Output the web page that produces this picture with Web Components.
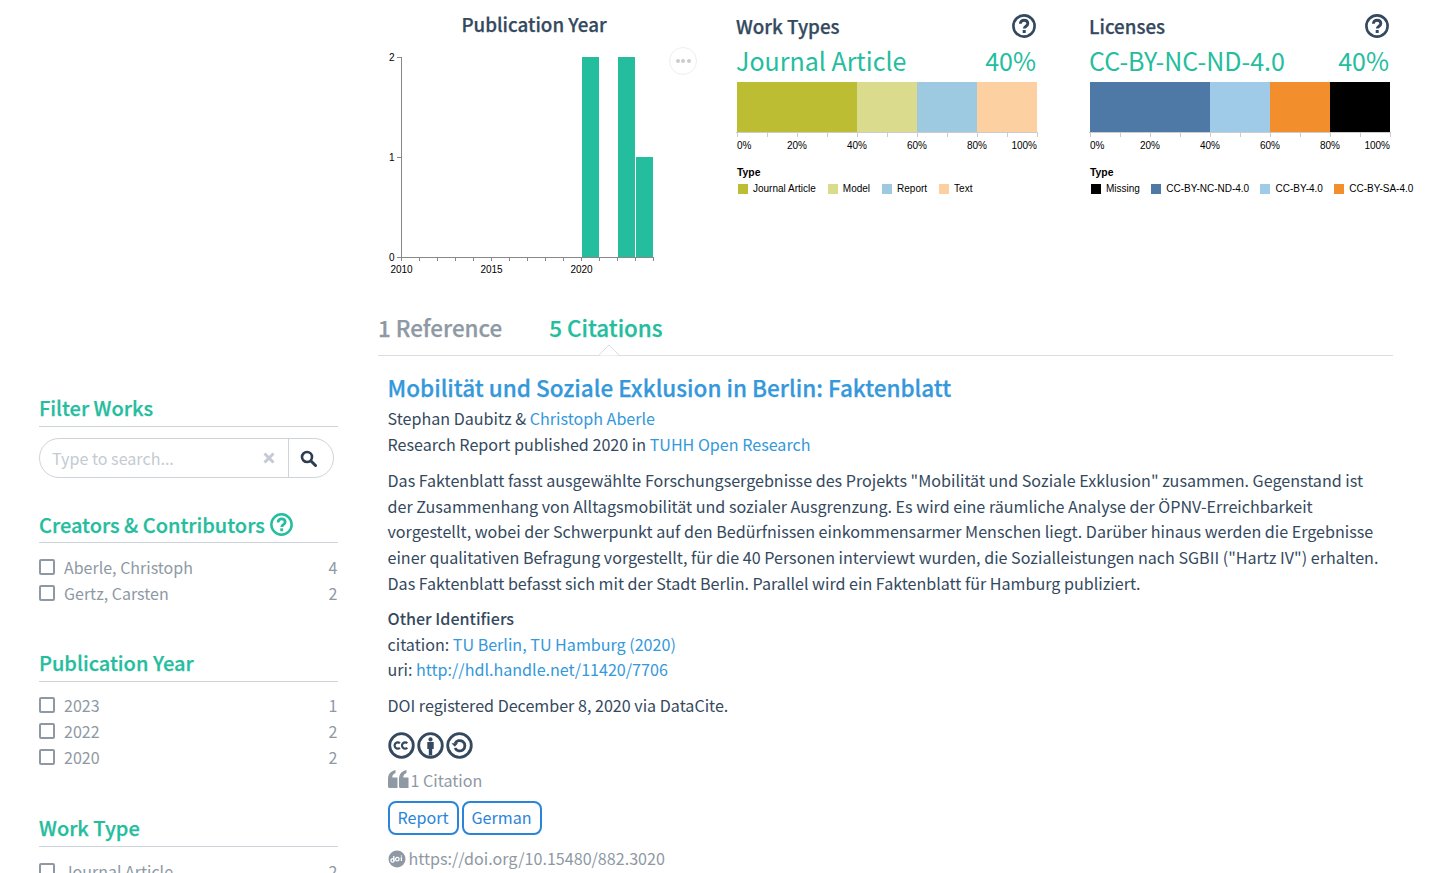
<!DOCTYPE html>
<html><head><meta charset="utf-8">
<style>
html,body{margin:0;padding:0;height:873px;overflow:hidden;background:#fff}
body{font:16.1px/25.7px "Noto Sans CJK SC","Noto Sans",sans-serif;color:#34495e}
</style></head><body>
<app-page></app-page>
<script>
const FONT='"Noto Sans CJK SC","Noto Sans",sans-serif';
function def(name,html){
  customElements.define(name,class extends HTMLElement{
    constructor(){super();this.attachShadow({mode:'open'}).innerHTML=typeof html==='function'?html(this):html;}
  });
}
const help=(c,s)=>`<svg width="${s}" height="${s}" viewBox="0 0 24 24" fill="none" style="display:block"><circle cx="12" cy="12" r="10.6" stroke="${c}" stroke-width="2.6"/><path d="M8.400 9.800c0-2.200 1.600-3.600 3.700-3.600s3.700 1.300 3.700 3.300c0 2.800-3.500 2.600-3.500 5.100" stroke="${c}" stroke-width="2.900"/><rect x="10.700" y="16" width="3" height="3" fill="${c}"/></svg>`;

def('year-chart',()=>{
  let t='';
  for(let i=0;i<=14;i++){const x=23.5+i*18;t+=`<path d="M${x} 257V261" stroke="#888"/>`}
  const lab=(x,y,s,a='middle')=>`<text x="${x}" y="${y}" text-anchor="${a}">${s}</text>`;
  return `<style>:host{display:block;width:359px;height:292px;position:relative}
  h3{margin:0;text-align:center;width:312px;font:500 18.800px/26px ${FONT};-webkit-text-stroke:.25px #34495e;padding-top:11px;color:#34495e}
  svg{display:block;margin-top:6px}
  text{font:10px "Liberation Sans",sans-serif;fill:#000}
  .more{position:absolute;left:291px;top:47px;width:26px;height:26px;border:1px solid #eee;border-radius:50%;background:#fff;display:flex;align-items:center;justify-content:center;gap:1.500px}
  .more i{width:4px;height:4px;border-radius:50%;background:#ccc}
  </style>
  <h3>Publication Year</h3>
  <svg width="300" height="240" viewBox="0 43 300 240">
   <path d="M23.500 57V257.500H275.500" fill="none" stroke="#888"/>
   <path d="M19 57.500H23M19 157.500H23M19 257.500H23" stroke="#888"/>
   ${t}
   <rect x="204" y="57" width="17" height="200" fill="#24bd9e"/>
   <rect x="240" y="57" width="17" height="200" fill="#24bd9e"/>
   <rect x="258" y="157" width="17" height="100" fill="#24bd9e"/>
   ${lab(16.500,61,'2','end')}${lab(16.500,161,'1','end')}${lab(16.500,261,'0','end')}
   ${lab(23.500,273,'2010')}${lab(113.500,273,'2015')}${lab(203.500,273,'2020')}
  </svg>
  <div class="more"><i></i><i></i><i></i></div>`;
});

def('stack-chart',(el)=>{
  const data=JSON.parse(el.getAttribute('data-d'));
  let bars='',x=0;
  data.bars.forEach(b=>{bars+=`<rect x="${x+1}" y="0" width="${b[1]*3}" height="50" fill="${b[0]}"/>`;x+=b[1]*3});
  let ticks='';for(let i=0;i<=10;i++){ticks+=`<path d="M${1.500+i*30} 50V55" stroke="#ccc"/>`}
  let labs='';[0,20,40,60,80,100].forEach(p=>{const px=1+p*3;
    labs+=`<text x="${p==100?301:px}" y="66.500" text-anchor="${p==0?'start':p==100?'end':'middle'}">${p}%</text>`});
  let leg='';data.legend.forEach(l=>{leg+=`<span class="li"><i style="background:${l[0]}"></i>${l[1]}</span>`});
  return `<style>:host{display:block;width:${el.getAttribute('w')}px;padding-top:13px}
  .h{display:flex;justify-content:space-between;align-items:center;width:300px;margin-left:-1px;height:26px;font:500 18.800px/26px ${FONT};-webkit-text-stroke:.25px #34495e;color:#34495e}
  .v{display:flex;justify-content:space-between;width:300px;margin-left:-1px;font:25px/34px ${FONT};color:#24bd9e;margin-top:4px}
  .c{display:block;margin-top:5px;margin-left:-1px}
  text{font:10px "Liberation Sans",sans-serif;fill:#000}
  .t{font:bold 10.400px/12px "Liberation Sans",sans-serif;color:#000;margin-top:15px}
  .l{display:flex;font:10px/12px "Liberation Sans",sans-serif;color:#000;margin-top:4px;white-space:nowrap}
  .li{display:flex;align-items:center;margin-right:${el.getAttribute('gap')}px}
  .li i{width:10px;height:10px;margin:0 5px 0 1px}
  </style>
  <div class="h"><span>${el.getAttribute('title')}</span>${help('#34495e',24)}</div>
  <div class="v"><span>${data.name}</span><span>40%</span></div>
  <svg class="c" width="303" height="70" viewBox="0 0 303 70">${bars}<path d="M0 50.500H302" stroke="#ccc"/>${ticks}${labs}</svg>
  <div class="t">Type</div>
  <div class="l">${leg}</div>`;
});

def('search-box',`<style>:host{display:flex;width:295px;height:40px;box-sizing:border-box;border:1px solid #ced4da;border-radius:20px;margin-top:11px;font:16.100px/38px ${FONT}}
 .i{flex:1;color:#c4cbd2;padding-left:12px;display:flex;justify-content:space-between;align-items:center}
 .x{margin-right:13px;display:block}
 .b{width:45px;border-left:1px solid #ced4da;display:flex;align-items:center;justify-content:center;box-sizing:border-box;padding-right:5px}
 </style><div class="i"><span>Type to search...</span><svg class="x" width="12" height="12" viewBox="0 0 12 12"><path d="M1.500 1.500l9 9M10.500 1.500l-9 9" stroke="#c4cbd2" stroke-width="3"/></svg></div>
 <div class="b"><svg width="17" height="17" viewBox="0 0 17 17" fill="none"><circle cx="7" cy="7" r="5" stroke="#2c3e50" stroke-width="2.600"/><path d="M11 11l4.500 4.500" stroke="#2c3e50" stroke-width="3" stroke-linecap="round"/></svg></div>`);

def('facet-head',(el)=>`<style>:host{display:block;border-bottom:1px solid #ced4da;height:33px;font:500 20px/30px ${FONT};-webkit-text-stroke:.25px #24bd9e;color:#24bd9e}
 div{display:flex;align-items:center;gap:5px;height:${el.hasAttribute('help')?31:30}px}</style><div><slot></slot>${el.hasAttribute('help')?help('#24bd9e',23):''}</div>`);

def('facet-item',(el)=>`<style>:host{display:flex;height:26px;align-items:center;font:16px/26px ${FONT};color:#8e99a4}
 i{width:12px;height:12px;border:2px solid #8e99a4;border-radius:2px;margin-right:9px;flex:none}
 span{flex:1}b{font-weight:400;margin-right:.5px}</style><i></i><span><slot></slot></span><b>${el.getAttribute('n')}</b>`);

def('side-bar',`<style>:host{display:block;width:378px;padding:393px 40px 0 39px;box-sizing:border-box;flex:none}</style>
 <facet-head>Filter Works</facet-head><search-box></search-box>
 <facet-head help style="margin-top:31px">Creators &amp; Contributors</facet-head>
 <div style="margin-top:11px"><facet-item n="4">Aberle, Christoph</facet-item><facet-item n="2">Gertz, Carsten</facet-item></div>
 <facet-head style="margin-top:42px">Publication Year</facet-head>
 <div style="margin-top:10px"><facet-item n="1">2023</facet-item><facet-item n="2">2022</facet-item><facet-item n="2">2020</facet-item></div>
 <facet-head style="margin-top:43px">Work Type</facet-head>
 <div style="margin-top:11px"><facet-item n="2">Journal Article</facet-item></div>`);

def('tab-bar',`<style>:host{display:flex;gap:47px;height:52px;border-bottom:1px solid #ddd;position:relative;font:500 22.400px/49px ${FONT};color:#8e99a4}
 span{-webkit-text-stroke:.25px #8e99a4}
 .a{color:#24bd9e;-webkit-text-stroke:.25px #24bd9e}
 span:first-child{margin-left:-.5px}
 svg{position:absolute;left:220px;bottom:-1px;display:block}
 </style><span>1 Reference</span><span class="a">5 Citations</span>
 <svg width="23" height="12" viewBox="0 0 23 12"><path d="M0 11.500H.5L11 1l10.500 10.500H23" fill="#fff" stroke="#ddd"/></svg>`);

def('cc-icons',`<style>:host{display:flex;gap:2px;margin-top:13px;height:27px}svg{display:block}</style>
 <svg width="27" height="27" viewBox="0 0 27 27" fill="none"><circle cx="13.500" cy="13.500" r="11.800" stroke="#34495e" stroke-width="2.800"/><path d="M11.900 11.300a3.100 3.100 0 1 0 0 4.400M19.300 11.300a3.100 3.100 0 1 0 0 4.400" stroke="#34495e" stroke-width="2.200"/></svg>
 <svg width="27" height="27" viewBox="0 0 27 27" fill="none"><circle cx="13.500" cy="13.500" r="11.800" stroke="#34495e" stroke-width="2.800"/><circle cx="13.500" cy="7.400" r="2.100" fill="#34495e"/><path d="M10.300 10h6.400v7h-1.500v6.500h-3.400v-6.500h-1.500z" fill="#34495e"/></svg>
 <svg width="27" height="27" viewBox="0 0 27 27" fill="none"><circle cx="13.500" cy="13.500" r="11.800" stroke="#34495e" stroke-width="2.800"/><path d="M9 11.500a5.200 5.200 0 1 1 0 4.500" stroke="#34495e" stroke-width="2.800"/><path d="M5.500 11.200h6.600l-3.300 3.600z" fill="#34495e"/></svg>`);

def('work-item',`<style>:host{display:block;padding:18px 0 0 9.500px;font:16.100px/25.700px ${FONT};color:#34495e}
 a{color:#3498db;text-decoration:none}
 h4{margin:0;font:500 22.500px/26px ${FONT};-webkit-text-stroke:.25px #3498db}
 p{margin:0;width:1000px}
 .a0{margin-top:6px}
 .abs{margin-top:10.600px}
 .ids{margin-top:9.400px;font-weight:500}
 .reg{margin-top:10px}
 .cit{display:flex;align-items:center;color:#8e99a4;height:24px;margin-top:10px}
 .cit svg{margin-right:2px;position:relative;top:-2px}
 .tags{display:flex;gap:3px;margin-top:8px}
 .tag{border:2px solid #2a85d8;color:#2a85d8;border-radius:8px;height:34px;line-height:28px;padding:0 8px;box-sizing:border-box}
 .doi{display:flex;align-items:center;gap:3px;color:#8e99a4;margin-top:11px;height:26px}
 </style>
 <h4><a>Mobilität und Soziale Exklusion in Berlin: Faktenblatt</a></h4>
 <p class="a0">Stephan Daubitz &amp; <a>Christoph Aberle</a></p>
 <p>Research Report published 2020 in <a>TUHH Open Research</a></p>
 <p class="abs">Das Faktenblatt fasst ausgewählte Forschungsergebnisse des Projekts "Mobilität und Soziale Exklusion" zusammen. Gegenstand ist der Zusammenhang von Alltagsmobilität und sozialer Ausgrenzung. Es wird eine räumliche Analyse der ÖPNV-Erreichbarkeit vorgestellt, wobei der Schwerpunkt auf den Bedürfnissen einkommensarmer Menschen liegt. Darüber hinaus werden die Ergebnisse einer qualitativen Befragung vorgestellt, für die 40 Personen interviewt wurden, die Sozialleistungen nach SGBII ("Hartz IV") erhalten. Das Faktenblatt befasst sich mit der Stadt Berlin. Parallel wird ein Faktenblatt für Hamburg publiziert.</p>
 <p class="ids">Other Identifiers</p>
 <p>citation: <a>TU Berlin, TU Hamburg (2020)</a></p>
 <p>uri: <a>http://hdl.handle.net/11420/7706</a></p>
 <p class="reg">DOI registered December 8, 2020 via DataCite.</p>
 <cc-icons></cc-icons>
 <div class="cit"><svg width="21" height="18" viewBox="0 0 21 18" fill="#8e99a4"><path d="M0 9.500C0 4 2.800 1 7.500 0v3C5.300 3.700 4.200 5.300 4.300 7.400H9.500V18H1.500A1.500 1.500 0 0 1 0 16.500zM11 9.500C11 4 13.800 1 18.500 0v3c-2.200.7-3.300 2.300-3.200 4.400h5.200V18h-8A1.500 1.500 0 0 1 11 16.500z"/></svg>1 Citation</div>
 <div class="tags"><span class="tag">Report</span><span class="tag">German</span></div>
 <div class="doi"><svg width="18" height="18" viewBox="0 0 18 18"><circle cx="9" cy="9" r="8.500" fill="#8e99a4"/><path d="M5.800 5.900v5M5.800 9.200a1.700 1.700 0 1 1-.01-.01M9.300 7.300a1.800 1.800 0 1 0 .01 0M13.400 7.300v3.700M13.400 5.500v1" fill="none" stroke="#fff" stroke-width="1.300"/></svg><span>https://doi.org/10.15480/882.3020</span></div>`);

def('main-col',`<style>:host{display:block;width:1015px;flex:none}
 .charts{display:flex;height:303px}
 </style>
 <div class="charts"><year-chart></year-chart>
 <stack-chart w="353" title="Work Types" gap="11" data-d='{"name":"Journal Article","bars":[["#bcbd32",40],["#dbdb8d",20],["#9ecae1",20],["#fdd0a2",20]],"legend":[["#bcbd32","Journal Article"],["#dbdb8d","Model"],["#9ecae1","Report"],["#fdd0a2","Text"]]}'></stack-chart>
 <stack-chart w="303" title="Licenses" gap="10.300" data-d='{"name":"CC-BY-NC-ND-4.0","bars":[["#4e79a7",40],["#a0cbe8",20],["#f28e2b",20],["#000000",20]],"legend":[["#000000","Missing"],["#4e79a7","CC-BY-NC-ND-4.0"],["#a0cbe8","CC-BY-4.0"],["#f28e2b","CC-BY-SA-4.0"]]}'></stack-chart>
 </div>
 <tab-bar></tab-bar><work-item></work-item>`);

def('app-page',`<style>:host{display:flex;width:1438px;height:873px;overflow:hidden}</style><side-bar></side-bar><main-col></main-col>`);
</script>
</body></html>
